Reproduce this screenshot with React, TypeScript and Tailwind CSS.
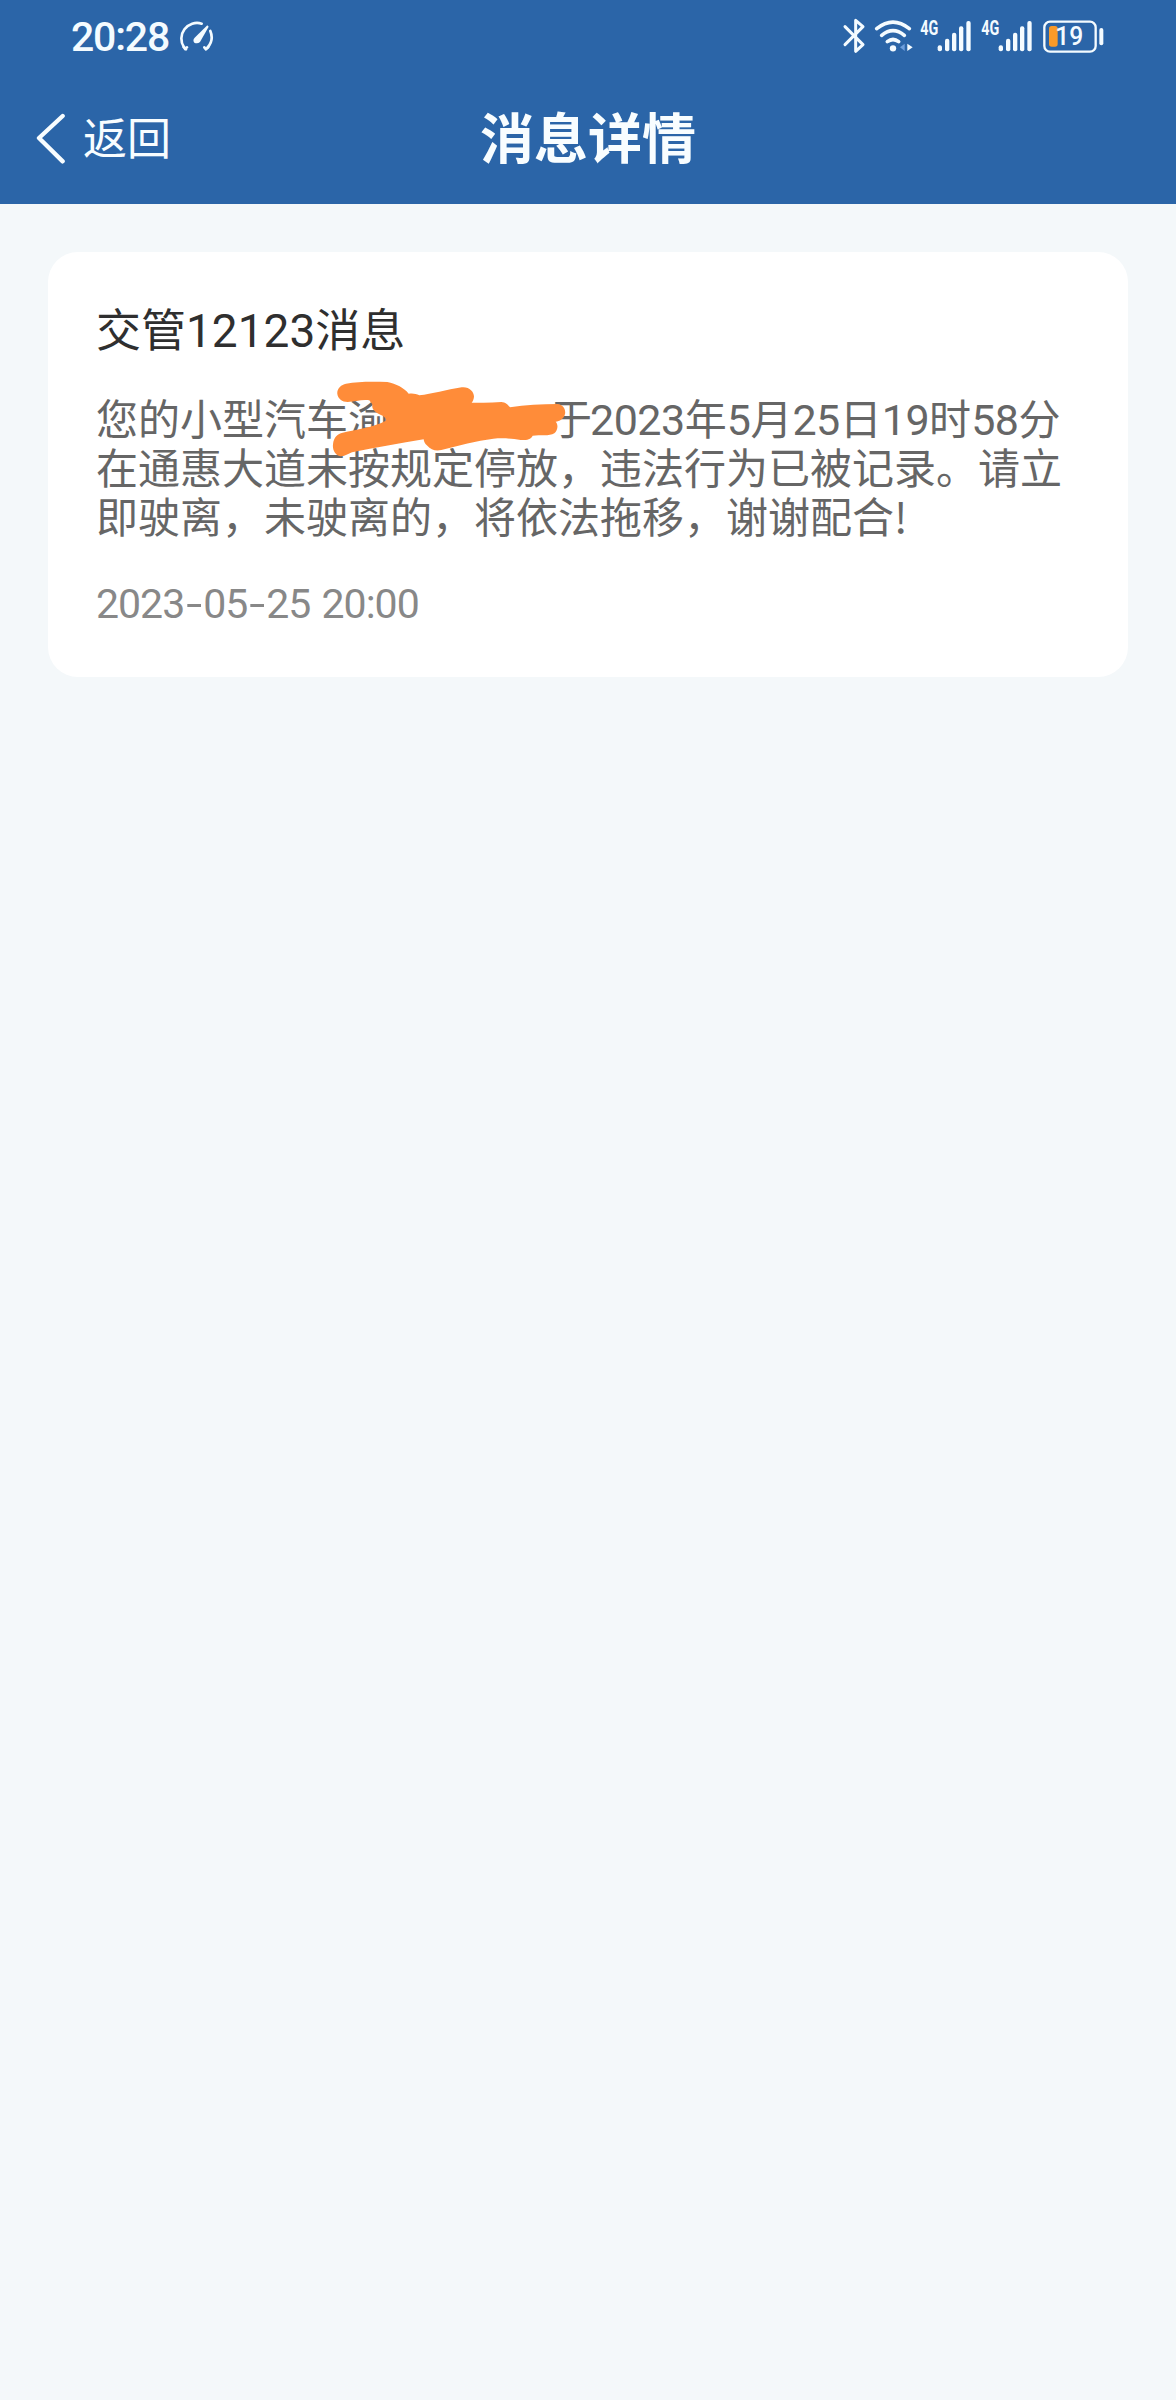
import React from 'react';

const message = {
  title: ['交管', '12123', '消息'],
  time: '2023-05-25 20:00',
};

// Latin digits sit in their own face so the "1" has no foot
function Num({ children, className = '' }: { children: React.ReactNode; className?: string }) {
  return <span className={`font-['Roboto'] ${className}`}>{children}</span>;
}

function BodyNum({ children }: { children: React.ReactNode }) {
  return <Num className="text-[43px] leading-[0] tracking-[-0.5px]">{children}</Num>;
}

function GaugeIcon() {
  return (
    <svg className="ml-[11px] h-20 w-9" viewBox="536 0 108 240" fill="none" stroke="#f4fbff" strokeLinecap="round">
      <path d="M607 71 A47 47 0 0 0 554 142" strokeWidth="8" />
      <path d="M633 93 A47 47 0 0 1 625 142" strokeWidth="8" />
      <path d="M553 141 L560 148 M620 148 L627 141 M557 147 L563 142 M615 142 L620 148" strokeWidth="8" />
      <path d="M624 76 L628 80 L602 126 Q594 133 585 128 Q579 121 586 113 Z" fill="#f4fbff" stroke="none" />
    </svg>
  );
}

function BluetoothIcon() {
  return (
    <svg className="h-20 w-7" viewBox="60 0 84 240" fill="none" stroke="#f4fbff" strokeWidth="9" strokeLinecap="round" strokeLinejoin="round">
      <path d="M75 80 L129 134 L107 154 V61 L129 80 L75 134" />
    </svg>
  );
}

function WifiIcon() {
  return (
    <svg className="ml-1 h-20 w-[42px]" viewBox="156 0 126 240" fill="none" stroke="#f4fbff" strokeLinecap="round">
      <path d="M170 86 Q219 47 268 86" strokeWidth="11" />
      <path d="M185 106 Q219 78 253 106" strokeWidth="11" />
      <path d="M202 125 Q219 112 236 125" strokeWidth="11" />
      <circle cx="219" cy="145" r="9.5" fill="#f4fbff" stroke="none" />
      <path d="M254 131 V153 L240 142 Z" fill="#6f9fdc" stroke="none" />
      <path d="M262 131 V153 L278 142 Z" fill="#f4fbff" stroke="none" />
    </svg>
  );
}

const bars = [
  { x: 353, y: 136 },
  { x: 375, y: 116 },
  { x: 396, y: 98 },
  { x: 417, y: 79 },
  { x: 439, y: 63 },
];

function SignalIcon({ className }: { className: string }) {
  return (
    <svg className={`h-20 w-[52px] ${className}`} viewBox="300 0 156 240" fill="#f4fbff">
      <text x="301" y="104" className="font-['Roboto'] text-[58px] font-bold" textLength="54" lengthAdjust="spacingAndGlyphs">
        4G
      </text>
      {bars.map((b) => (
        <rect key={b.x} x={b.x} y={b.y} width="13" height={154 - b.y} rx="6" />
      ))}
    </svg>
  );
}

function BatteryIcon() {
  return (
    <svg className="ml-[7px] h-20 w-[68px]" viewBox="180 0 204 240">
      <rect x="193" y="65" width="154" height="90" rx="17" fill="none" stroke="#f4fbff" strokeWidth="7" />
      <rect x="207" y="78" width="26" height="62" rx="8" fill="#fa9a28" />
      <rect x="358" y="84" width="12" height="52" rx="6" fill="#f4fbff" />
      <text x="226" y="135" fill="#f4fbff" className="font-['Roboto'] text-[75px] font-medium" textLength="84" lengthAdjust="spacingAndGlyphs">
        19
      </text>
    </svg>
  );
}

function StatusBar() {
  return (
    <div className="flex h-20 items-center justify-between pl-[71px] pr-[68px] text-[#f4fbff]">
      <div className="flex items-center">
        <Num className="-mt-[5px] w-[96px] whitespace-nowrap text-[41px] font-medium leading-none tracking-[-1.2px]">
          20<span className="relative -top-[1px]">:</span>28
        </Num>
        <GaugeIcon />
      </div>
      <div className="flex items-center">
        <BluetoothIcon />
        <WifiIcon />
        <SignalIcon className="ml-1.5" />
        <SignalIcon className="ml-[9px]" />
        <BatteryIcon />
      </div>
    </div>
  );
}

function NavBar() {
  return (
    <div className="grid h-[124px] grid-cols-3 items-start px-9 pt-6 text-[#f8fdff]">
      <button className="flex h-16 items-center text-left">
        <svg className="mt-1 h-[52px] w-[30px]" viewBox="0 0 90 156" fill="none" stroke="currentColor" strokeWidth="13" strokeLinecap="round" strokeLinejoin="round">
          <path d="M80 12 L9 78 L80 148" />
        </svg>
        <span className="ml-[17px] text-[44px] leading-[64px]">返回</span>
      </button>
      <h1 className="text-center text-[54px] font-bold leading-[64px]">消息详情</h1>
    </div>
  );
}

// Marker stroke that hides the plate number
function Scribble() {
  return (
    <svg className="absolute -top-[31px] left-[214px] h-[120px] w-[300px]" viewBox="0 0 900 360" fill="#ff8c39">
      <path d="M108 68 C145 61 190 62 232 63 C258 68 283 81 296 98 C308 96 318 98 328 103 C365 100 410 85 455 79 C476 76 492 91 492 107 C491 116 488 121 485 125 C515 125 545 126 574 123 C586 123 594 132 600 139 C645 131 695 129 743 129 C759 131 768 145 765 159 C762 174 748 181 737 182 C746 192 743 207 733 217 C718 226 691 222 668 224 C662 236 647 238 632 237 C604 232 577 231 550 233 C499 240 446 253 394 267 C377 271 362 266 352 254 C343 247 342 241 341 235 C271 247 196 260 126 274 C111 281 101 287 91 286 C75 282 67 266 69 250 C71 228 83 219 98 215 C139 206 190 199 226 180 C229 175 226 169 218 164 C198 158 184 144 187 133 C187 128 182 124 178 118 C157 114 135 122 113 123 C96 123 84 113 82 99 C80 83 93 71 108 68 Z" />
    </svg>
  );
}

function MessageCard() {
  return (
    <article className="mx-12 mt-12 h-[425px] rounded-[30px] bg-white px-12 pt-11">
      <h2 className="whitespace-nowrap text-[45px] leading-[64px] text-[#2f2f2f]">
        {message.title[0]}
        <Num className="text-[46px] leading-[0]">{message.title[1]}</Num>
        {message.title[2]}
      </h2>
      <div className="relative mt-8 whitespace-nowrap text-[42px] leading-[49px] text-[#666]">
        <p className="h-[49px]">
          您的小型汽车渝
          <span className="inline-block w-[160px]" />
          <span className="tracking-[-2px]">于</span>
          <BodyNum>2023</BodyNum>年<BodyNum>5</BodyNum>月<BodyNum>25</BodyNum>日
          <BodyNum>19</BodyNum>时<BodyNum>58</BodyNum>分
        </p>
        <p className="h-[49px]">在通惠大道未按规定停放，违法行为已被记录。请立</p>
        <p className="h-[49px]">即驶离，未驶离的，将依法拖移，谢谢配合!</p>
        <Scribble />
      </div>
      <time className="mt-[33px] block whitespace-nowrap text-[41px] leading-[56px] text-[#888]">
        <Num className="tracking-[-1px] [word-spacing:2px]">
          {message.time.split('').map((c, i) =>
            c === '-' ? (
              <span key={i} className="inline-block w-[19px] scale-x-140 text-center">-</span>
            ) : (
              c
            )
          )}
        </Num>
      </time>
    </article>
  );
}

export default function App() {
  return (
    <div className="h-[2400px] w-[1176px] overflow-hidden bg-[#f4f8fa] font-['Noto_Sans_CJK_SC',sans-serif]">
      <header className="h-[204px] bg-[#2b65a8]">
        <StatusBar />
        <NavBar />
      </header>
      <main className="flow-root">
        <MessageCard />
      </main>
    </div>
  );
}
